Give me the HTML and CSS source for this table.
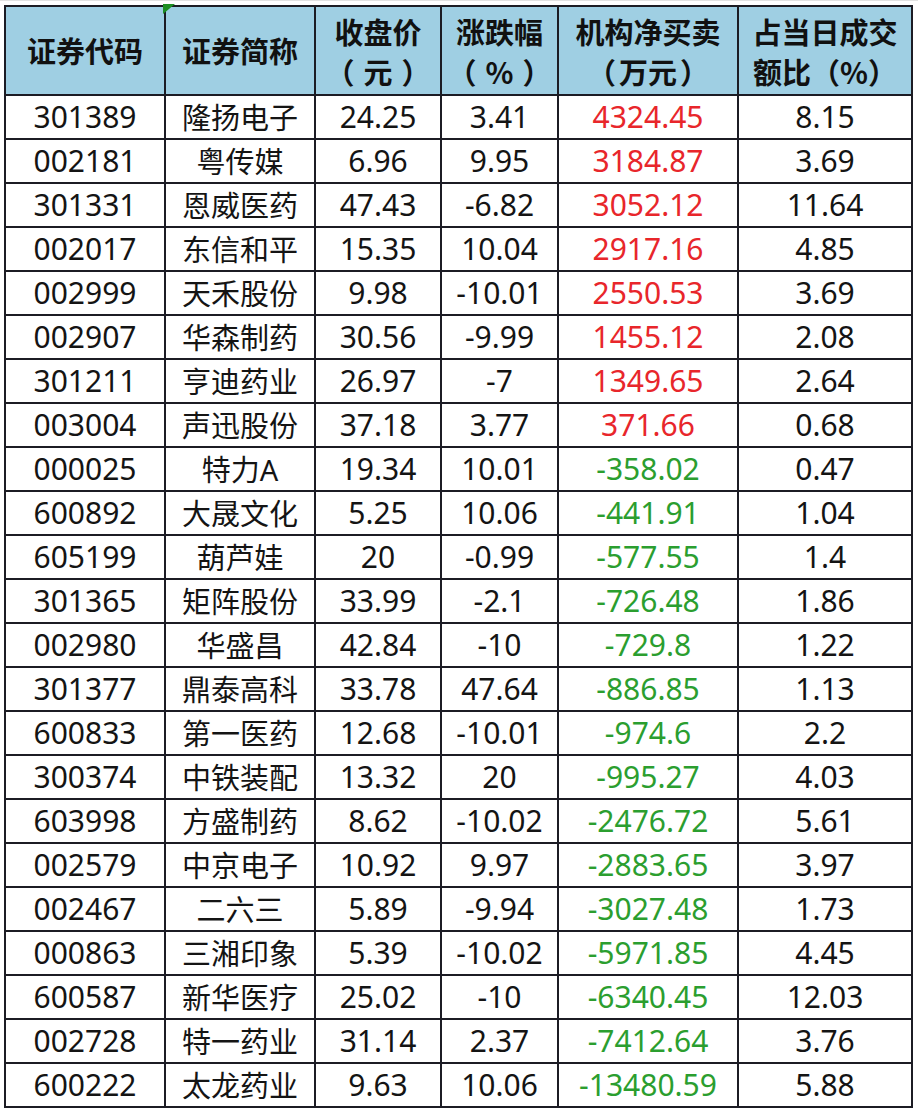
FILE: index.html
```html
<!DOCTYPE html>
<html lang="zh-CN">
<head>
<meta charset="utf-8">
<title>机构净买卖</title>
<link rel="stylesheet" href="styles.css">
</head>
<body>
<div class="sheet">
  <div class="grid">
    <div class="hd">证券代码</div>
    <div class="hd mark">证券简称<span class="tri"></span></div>
    <div class="hd two"><p class="cap">收盘价<br><span class="op">（</span>元<span class="cp">）</span></p></div>
    <div class="hd two"><p class="cap">涨跌幅<br><span class="op">（</span>%<span class="cp">）</span></p></div>
    <div class="hd two"><p class="cap">机构净买卖<br><span class="op tight">（</span>万元<span class="cp tight">）</span></p></div>
    <div class="hd two"><p class="cap">占当日成交<br>额比（%）</p></div>

    <div>301389</div><div>隆扬电子</div><div>24.25</div><div>3.41</div><div class="up">4324.45</div><div>8.15</div>
    <div>002181</div><div>粤传媒</div><div>6.96</div><div>9.95</div><div class="up">3184.87</div><div>3.69</div>
    <div>301331</div><div>恩威医药</div><div>47.43</div><div>-6.82</div><div class="up">3052.12</div><div>11.64</div>
    <div>002017</div><div>东信和平</div><div>15.35</div><div>10.04</div><div class="up">2917.16</div><div>4.85</div>
    <div>002999</div><div>天禾股份</div><div>9.98</div><div>-10.01</div><div class="up">2550.53</div><div>3.69</div>
    <div>002907</div><div>华森制药</div><div>30.56</div><div>-9.99</div><div class="up">1455.12</div><div>2.08</div>
    <div>301211</div><div>亨迪药业</div><div>26.97</div><div>-7</div><div class="up">1349.65</div><div>2.64</div>
    <div>003004</div><div>声迅股份</div><div>37.18</div><div>3.77</div><div class="up">371.66</div><div>0.68</div>
    <div>000025</div><div>特力A</div><div>19.34</div><div>10.01</div><div class="down">-358.02</div><div>0.47</div>
    <div>600892</div><div>大晟文化</div><div>5.25</div><div>10.06</div><div class="down">-441.91</div><div>1.04</div>
    <div>605199</div><div>葫芦娃</div><div>20</div><div>-0.99</div><div class="down">-577.55</div><div>1.4</div>
    <div>301365</div><div>矩阵股份</div><div>33.99</div><div>-2.1</div><div class="down">-726.48</div><div>1.86</div>
    <div>002980</div><div>华盛昌</div><div>42.84</div><div>-10</div><div class="down">-729.8</div><div>1.22</div>
    <div>301377</div><div>鼎泰高科</div><div>33.78</div><div>47.64</div><div class="down">-886.85</div><div>1.13</div>
    <div>600833</div><div>第一医药</div><div>12.68</div><div>-10.01</div><div class="down">-974.6</div><div>2.2</div>
    <div>300374</div><div>中铁装配</div><div>13.32</div><div>20</div><div class="down">-995.27</div><div>4.03</div>
    <div>603998</div><div>方盛制药</div><div>8.62</div><div>-10.02</div><div class="down">-2476.72</div><div>5.61</div>
    <div>002579</div><div>中京电子</div><div>10.92</div><div>9.97</div><div class="down">-2883.65</div><div>3.97</div>
    <div>002467</div><div>二六三</div><div>5.89</div><div>-9.94</div><div class="down">-3027.48</div><div>1.73</div>
    <div>000863</div><div>三湘印象</div><div>5.39</div><div>-10.02</div><div class="down">-5971.85</div><div>4.45</div>
    <div>600587</div><div>新华医疗</div><div>25.02</div><div>-10</div><div class="down">-6340.45</div><div>12.03</div>
    <div>002728</div><div>特一药业</div><div>31.14</div><div>2.37</div><div class="down">-7412.64</div><div>3.76</div>
    <div>600222</div><div>太龙药业</div><div>9.63</div><div>10.06</div><div class="down">-13480.59</div><div>5.88</div>
  </div>
</div>
</body>
</html>
```
FILE: styles.css
```css
html, body {
  margin: 0;
  padding: 0;
  background: #ffffff;
}

.sheet {
  width: 918px;
  height: 1116px;
  box-sizing: border-box;
  padding: 4px 0 0 4px;
  border-top: 1px solid #e2e2e2;
  background: #ffffff;
}

.grid {
  display: grid;
  grid-template-columns: 158px 148px 124px 115px 178px 172px;
  grid-template-rows: 87px;
  grid-auto-rows: 42px;
  gap: 2px;
  padding: 2px;
  width: max-content;
  background: #1c1c24;
  font-family: "Noto Sans", "Noto Sans CJK SC", sans-serif;
  font-size: 30px;
  color: #141414;
}

.grid > div {
  background: #ffffff;
  display: flex;
  align-items: center;
  justify-content: center;
  text-align: center;
  line-height: 1;
  white-space: nowrap;
}

.grid > div:nth-child(6n+2) {
  font-size: 29px;
}

.grid > .hd {
  background: #9fcfe3;
  font-family: "Noto Sans CJK SC", "Noto Sans", sans-serif;
  font-weight: 700;
  font-size: 29px;
  color: #111111;
}

.cap {
  margin: 0;
  line-height: 40px;
  text-align: center;
}

.op {
  margin-right: 9px;
}

.cp {
  margin-left: 9px;
}

.op.tight {
  margin-right: 3px;
}

.cp.tight {
  margin-left: 3px;
}

.mark {
  position: relative;
}

.tri {
  position: absolute;
  left: -3px;
  top: -3px;
  width: 0;
  height: 0;
  border-top: 10px solid #1e8f23;
  border-right: 12px solid transparent;
}

.up {
  color: #e8262b;
}

.down {
  color: #2b9e2f;
}
```
